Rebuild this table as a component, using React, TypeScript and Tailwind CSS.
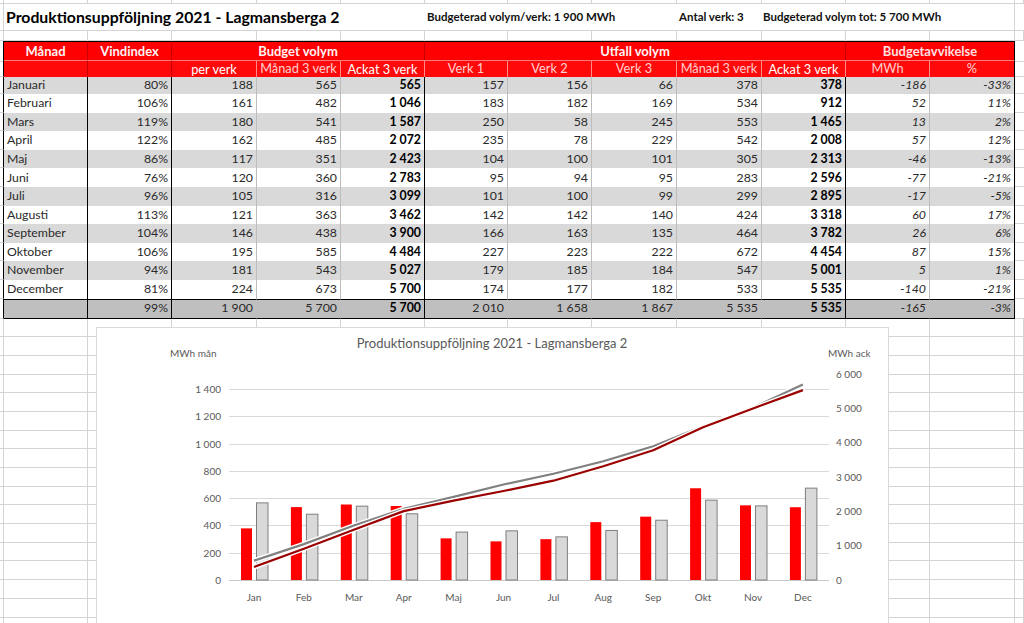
import clsx from 'clsx'

const COLS = 'grid grid-cols-[4px_84px_84px_85px_84px_84px_83px_84px_85px_85px_84px_84px_85px_9px]'

const rows: string[][] = [
  ['Januari', '80%', '188', '565', '565', '157', '156', '66', '378', '378', '-186', '-33%'],
  ['Februari', '106%', '161', '482', '1 046', '183', '182', '169', '534', '912', '52', '11%'],
  ['Mars', '119%', '180', '541', '1 587', '250', '58', '245', '553', '1 465', '13', '2%'],
  ['April', '122%', '162', '485', '2 072', '235', '78', '229', '542', '2 008', '57', '12%'],
  ['Maj', '86%', '117', '351', '2 423', '104', '100', '101', '305', '2 313', '-46', '-13%'],
  ['Juni', '76%', '120', '360', '2 783', '95', '94', '95', '283', '2 596', '-77', '-21%'],
  ['Juli', '96%', '105', '316', '3 099', '101', '100', '99', '299', '2 895', '-17', '-5%'],
  ['Augusti', '113%', '121', '363', '3 462', '142', '142', '140', '424', '3 318', '60', '17%'],
  ['September', '104%', '146', '438', '3 900', '166', '163', '135', '464', '3 782', '26', '6%'],
  ['Oktober', '106%', '195', '585', '4 484', '227', '223', '222', '672', '4 454', '87', '15%'],
  ['November', '94%', '181', '543', '5 027', '179', '185', '184', '547', '5 001', '5', '1%'],
  ['December', '81%', '224', '673', '5 700', '174', '177', '182', '533', '5 535', '-140', '-21%'],
]
const total = ['', '99%', '1 900', '5 700', '5 700', '2 010', '1 658', '1 867', '5 535', '5 535', '-165', '-3%']

const DARK = [0, 1, 4, 9, 11]

const months = ['Jan', 'Feb', 'Mar', 'Apr', 'Maj', 'Jun', 'Jul', 'Aug', 'Sep', 'Okt', 'Nov', 'Dec']
const utfall = [378, 534, 553, 542, 305, 283, 299, 424, 464, 672, 547, 533]
const budget = [565, 482, 541, 485, 351, 360, 316, 363, 438, 585, 543, 673]
const budgetAck = [565, 1046, 1587, 2072, 2423, 2783, 3099, 3462, 3900, 4484, 5027, 5700]
const utfallAck = [378, 912, 1465, 2008, 2313, 2596, 2895, 3318, 3782, 4454, 5001, 5535]

function SheetRow({ h }: { h: string }) {
  return (
    <div className={clsx(COLS, h)}>
      {Array.from({ length: 14 }).map((_, i) => (
        <div key={i} className="border-r border-b border-[#d4d4d4]" />
      ))}
    </div>
  )
}

function TableRow({ cells, bg, h, isTotal }: { cells: string[]; bg: string; h: string; isTotal?: boolean }) {
  return (
    <div className={clsx(COLS, h)}>
      <div className="border-r border-r-black border-b border-b-[#d4d4d4]" />
      {cells.map((c, i) => (
        <div
          key={i}
          className={clsx(
            'flex items-center px-[3px] text-[12.3px] leading-none text-[#2a2a2a]',
            bg,
            i === 0 ? 'justify-start' : 'justify-end',
            DARK.includes(i) ? 'border-r border-r-black' : 'border-r border-r-[#bdbdbd]',
            (i === 4 || i === 9) && 'font-bold text-black',
            i >= 10 && 'italic',
            isTotal && 'border-y border-y-black'
          )}
        >
          {c}
        </div>
      ))}
      <div className="border-b border-[#d4d4d4]" />
    </div>
  )
}

const ly = (v: number) => 580 - v * 0.1365
const ry = (v: number) => 580 - v * 0.0343
const cx = (i: number) => 254 + i * 49.9

function Chart() {
  const budgetPts = budgetAck.map((v, i) => `${cx(i)},${ry(v)}`).join(' ')
  const utfallPts = utfallAck.map((v, i) => `${cx(i)},${ry(v)}`).join(' ')
  return (
    <div className="absolute left-[96px] top-[327px] w-[793px] h-[300px] bg-white">
      <svg width="793" height="300" viewBox="96 327 793 300" className="block">
        <rect x="96.5" y="327.5" width="792" height="310" fill="#fff" stroke="#d9d9d9" />
        <text x="492" y="348" textAnchor="middle" fontSize="13" fill="#595959" fontFamily="Lato, sans-serif">
          Produktionsuppföljning 2021 - Lagmansberga 2
        </text>
        <text x="170" y="357" fontSize="10" fill="#595959" fontFamily="Lato, sans-serif">MWh mån</text>
        <text x="828" y="357" fontSize="10" fill="#595959" fontFamily="Lato, sans-serif">MWh ack</text>

        {Array.from({ length: 8 }).map((_, k) => {
          const y = Math.round(580 - k * 27.3) + 0.5
          return (
            <g key={k}>
              <line x1="229" x2="829" y1={y} y2={y} stroke={k === 0 ? '#c8c8c8' : '#d9d9d9'} strokeWidth="1" />
              <text x="221" y={y + 3.5} textAnchor="end" fontSize="10" fill="#595959" fontFamily="Lato, sans-serif">
                {k === 0 ? '0' : k >= 5 ? `1 ${String(k * 200 - 1000).padStart(3, '0')}` : String(k * 200)}
              </text>
            </g>
          )
        })}
        {Array.from({ length: 7 }).map((_, k) => (
          <text key={k} x="836" y={580 - k * 34.3 + 3.5} fontSize="10" fill="#595959" fontFamily="Lato, sans-serif">
            {k === 0 ? '0' : `${k} 000`}
          </text>
        ))}

        {months.map((m, i) => (
          <g key={m}>
            <rect x={cx(i) - 13} y={ly(utfall[i])} width="11" height={580 - ly(utfall[i])} fill="#ff0000" />
            <rect
              x={cx(i) + 2.5}
              y={ly(budget[i])}
              width="11.5"
              height={580 - ly(budget[i])}
              fill="#d9d9d9"
              stroke="#7f7f7f"
              strokeWidth="1"
            />
            <text x={cx(i)} y="601" textAnchor="middle" fontSize="10" fill="#595959" fontFamily="Lato, sans-serif">
              {m}
            </text>
          </g>
        ))}

        <polyline points={budgetPts} fill="none" stroke="#fff" strokeWidth="5" strokeLinejoin="round" />
        <polyline points={budgetPts} fill="none" stroke="#808080" strokeWidth="2.2" strokeLinejoin="round" />
        <polyline points={utfallPts} fill="none" stroke="#fff" strokeWidth="5" strokeLinejoin="round" />
        <polyline points={utfallPts} fill="none" stroke="#9b0000" strokeWidth="2.2" strokeLinejoin="round" />
      </svg>
    </div>
  )
}

export default function App() {
  const hdr2 = [
    { t: '', hi: true },
    { t: '', hi: true },
    { t: 'per verk', hi: true },
    { t: 'Månad 3 verk', hi: false },
    { t: 'Ackat 3 verk', hi: true },
    { t: 'Verk 1', hi: false },
    { t: 'Verk 2', hi: false },
    { t: 'Verk 3', hi: false },
    { t: 'Månad 3 verk', hi: false },
    { t: 'Ackat 3 verk', hi: true },
    { t: 'MWh', hi: false },
    { t: '%', hi: false },
  ]

  return (
    <div className="relative w-[1024px] h-[623px] overflow-hidden bg-white font-['Lato','Liberation_Sans',sans-serif]">
      <SheetRow h="h-[4px]" />

      {/* title row */}
      <div className={clsx(COLS, 'h-[27px] border-b border-[#d4d4d4]')}>
        <div className="border-r border-[#d4d4d4]" />
        <div className="col-span-5 flex items-center pl-[2px] text-[15.8px] font-bold text-black">
          Produktionsuppföljning 2021 - Lagmansberga 2
        </div>
        <div className="col-span-3 flex items-center pl-[2px] text-[11.5px] font-bold text-[#111]">
          Budgeterad volym/verk: 1 900 MWh
        </div>
        <div className="flex items-center pl-[2px] text-[11.5px] font-bold text-[#111]">Antal verk: 3</div>
        <div className="col-span-3 flex items-center pl-[1px] text-[11.5px] font-bold text-[#111] border-r border-[#d4d4d4]">
          Budgeterad volym tot: 5 700 MWh
        </div>
        <div />
      </div>

      <SheetRow h="h-[10px]" />

      {/* header row 1 */}
      <div className={clsx(COLS, 'h-[19px]')}>
        <div className="border-r border-r-black border-b border-b-[#d4d4d4]" />
        <div className="flex items-center justify-center bg-[#ff0000] border-t border-t-black border-r border-r-[#c80000] text-[13px] font-bold text-[#fff4f4]">
          Månad
        </div>
        <div className="flex items-center justify-center bg-[#ff0000] border-t border-t-black border-r border-r-[#c80000] text-[13px] font-bold text-[#fff4f4]">
          Vindindex
        </div>
        <div className="col-span-3 flex items-center justify-center bg-[#ff0000] border-t border-t-black border-r border-r-[#c80000] text-[13px] font-bold text-[#fff4f4]">
          Budget volym
        </div>
        <div className="col-span-5 flex items-center justify-center bg-[#ff0000] border-t border-t-black border-r border-r-[#c80000] text-[13px] font-bold text-[#fff4f4]">
          Utfall volym
        </div>
        <div className="col-span-2 flex items-center justify-center bg-[#ff0000] border-t border-t-black border-r border-r-black text-[13px] font-bold text-[#ffe0e0]">
          Budgetavvikelse
        </div>
        <div className="border-b border-[#d4d4d4]" />
      </div>

      {/* header row 2 */}
      <div className={clsx(COLS, 'h-[17px]')}>
        <div className="border-r border-r-black border-b border-b-[#d4d4d4]" />
        {hdr2.map((c, i) => (
          <div
            key={i}
            className={clsx(
              'flex justify-center bg-[#ff0a0a] border-t border-t-[#ff7a7a] text-[12.8px] leading-none',
              c.hi ? 'items-end pb-[1px] text-white' : 'items-start pt-[1px] text-[#ffd0d0]',
              i === 11 ? 'border-r border-r-black' : i <= 1 ? 'border-r border-r-[#c80000]' : 'border-r border-r-[#ff8a8a]'
            )}
          >
            {c.t}
          </div>
        ))}
        <div className="border-b border-[#d4d4d4]" />
      </div>

      {rows.map((r, i) => (
        <TableRow
          key={r[0]}
          cells={r}
          bg={i % 2 === 0 ? 'bg-[#d9d9d9]' : 'bg-white'}
          h={i === 0 ? 'h-[17px]' : 'h-[18.6px]'}
        />
      ))}
      <TableRow cells={total} bg="bg-[#bfbfbf]" h="h-[20px]" isTotal />

      {Array.from({ length: 17 }).map((_, i) => (
        <SheetRow key={i} h="h-[18.7px]" />
      ))}

      <Chart />
    </div>
  )
}
